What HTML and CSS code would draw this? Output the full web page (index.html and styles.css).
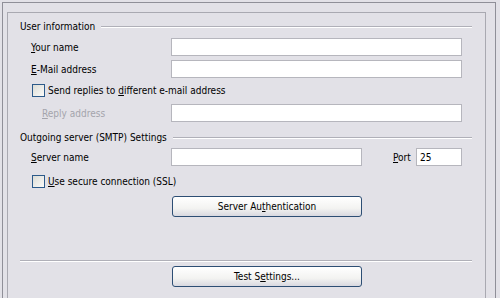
FILE: index.html
```html
<html>
    <head>
        <link rel="stylesheet" href="styles.css">
    </head>
    <body>
    <div class="outer">
        <div class="inner">
            <div class="section-title"><span>User information</span><div class="rule"></div></div>

            <div class="row">
                <label class="label"><u>Y</u>our name</label>
                <input class="field wide" type="text">
            </div>
            <div class="row">
                <label class="label"><u>E</u>-Mail address</label>
                <input class="field wide" type="text">
            </div>
            <div class="check-row">
                <span class="box"></span>
                <span>Send replies to <u>d</u>ifferent e-mail address</span>
            </div>
            <div class="row reply">
                <label class="label sub disabled"><u>R</u>eply address</label>
                <input class="field wide" type="text">
            </div>

            <div class="section-title second"><span>Outgoing server (SMTP) Settings</span><div class="rule"></div></div>

            <div class="row">
                <label class="label"><u>S</u>erver name</label>
                <input class="field server" type="text">
                <label class="port-label"><u>P</u>ort</label>
                <input class="field port" type="text" value="25">
            </div>
            <div class="check-row ssl">
                <span class="box"></span>
                <span><u>U</u>se secure connection (SSL)</span>
            </div>
            <div class="btn-row">
                <button class="btn">Server Au<u>t</u>hentication</button>
            </div>

            <div class="bottom-rule"></div>
            <div class="btn-row last">
                <button class="btn">Test S<u>e</u>ttings...</button>
            </div>
        </div>
    </div>
    </body>
</html>
```
FILE: styles.css
```css
body {
    margin: 0;
    background-color: #e2e1e7;
    font-family: "DejaVu Sans Condensed", "Liberation Sans", Arial, sans-serif;
    font-size: 10px;
    color: #000;
    height: 298px;
    overflow: hidden;
}

u {
    text-decoration: underline;
    text-underline-offset: 1px;
}

.outer {
    margin: 2px 4px 0 2px;
    height: 296px;
    box-sizing: border-box;
    border: 1px solid #8f8f98;
    border-bottom: none;
    padding: 9px 9px 0 4px;
}

.inner {
    height: 100%;
    box-sizing: border-box;
    border: 1px solid #a9a9b1;
    border-bottom: none;
    padding: 7px 13px 0 12px;
}

.section-title {
    display: flex;
    align-items: center;
    height: 14px;
    line-height: 14px;
}
.section-title.second {
    margin-top: 9px;
}
.rule {
    flex: 1;
    margin-left: 6px;
    border-top: 1px solid #b0b0b8;
    border-bottom: 1px solid #fff;
}

.row {
    display: flex;
    align-items: center;
    height: 18px;
    margin-top: 4px;
}
.row.reply {
    margin-top: 6px;
}
.section-title + .row {
    margin-top: 4px;
}
.section-title.second + .row {
    margin-top: 3px;
}

.label {
    width: 151px;
    padding-left: 11px;
    box-sizing: border-box;
    flex: none;
}
.label.sub {
    padding-left: 22px;
}
.disabled {
    color: #a4a4ac;
}

.field {
    height: 18px;
    box-sizing: border-box;
    border: 1px solid #b6b6bd;
    background: #fff;
    font-family: inherit;
    font-size: 10px;
    padding: 0 0 0 3px;
    margin: 0;
    outline: none;
}
.field.wide {
    width: 291px;
}
.field.server {
    width: 191px;
}
.port-label {
    margin-left: 31px;
    width: 23px;
}
.field.port {
    width: 46px;
}

.check-row {
    display: flex;
    align-items: center;
    height: 16px;
    margin-top: 4px;
    padding-left: 12px;
}
.check-row.ssl {
    margin-top: 7px;
}
.box {
    width: 11px;
    height: 11px;
    border: 1px solid #2c5a8a;
    background: linear-gradient(135deg, #dcdcd6, #fbfbf9);
    margin-right: 3px;
    flex: none;
}

.btn-row {
    padding-left: 152px;
    margin-top: 7px;
}
.btn-row.last {
    margin-top: 4px;
}
.btn {
    width: 190px;
    height: 21px;
    border: 1px solid #2d4e74;
    border-radius: 3px;
    background: linear-gradient(#ffffff, #f3f3f1 60%, #d8d8e0);
    font-family: inherit;
    font-size: 10px;
    padding: 0;
    color: #000;
}

.bottom-rule {
    margin-top: 43px;
    border-top: 1px solid #b0b0b8;
    border-bottom: 1px solid #fff;
}
```
